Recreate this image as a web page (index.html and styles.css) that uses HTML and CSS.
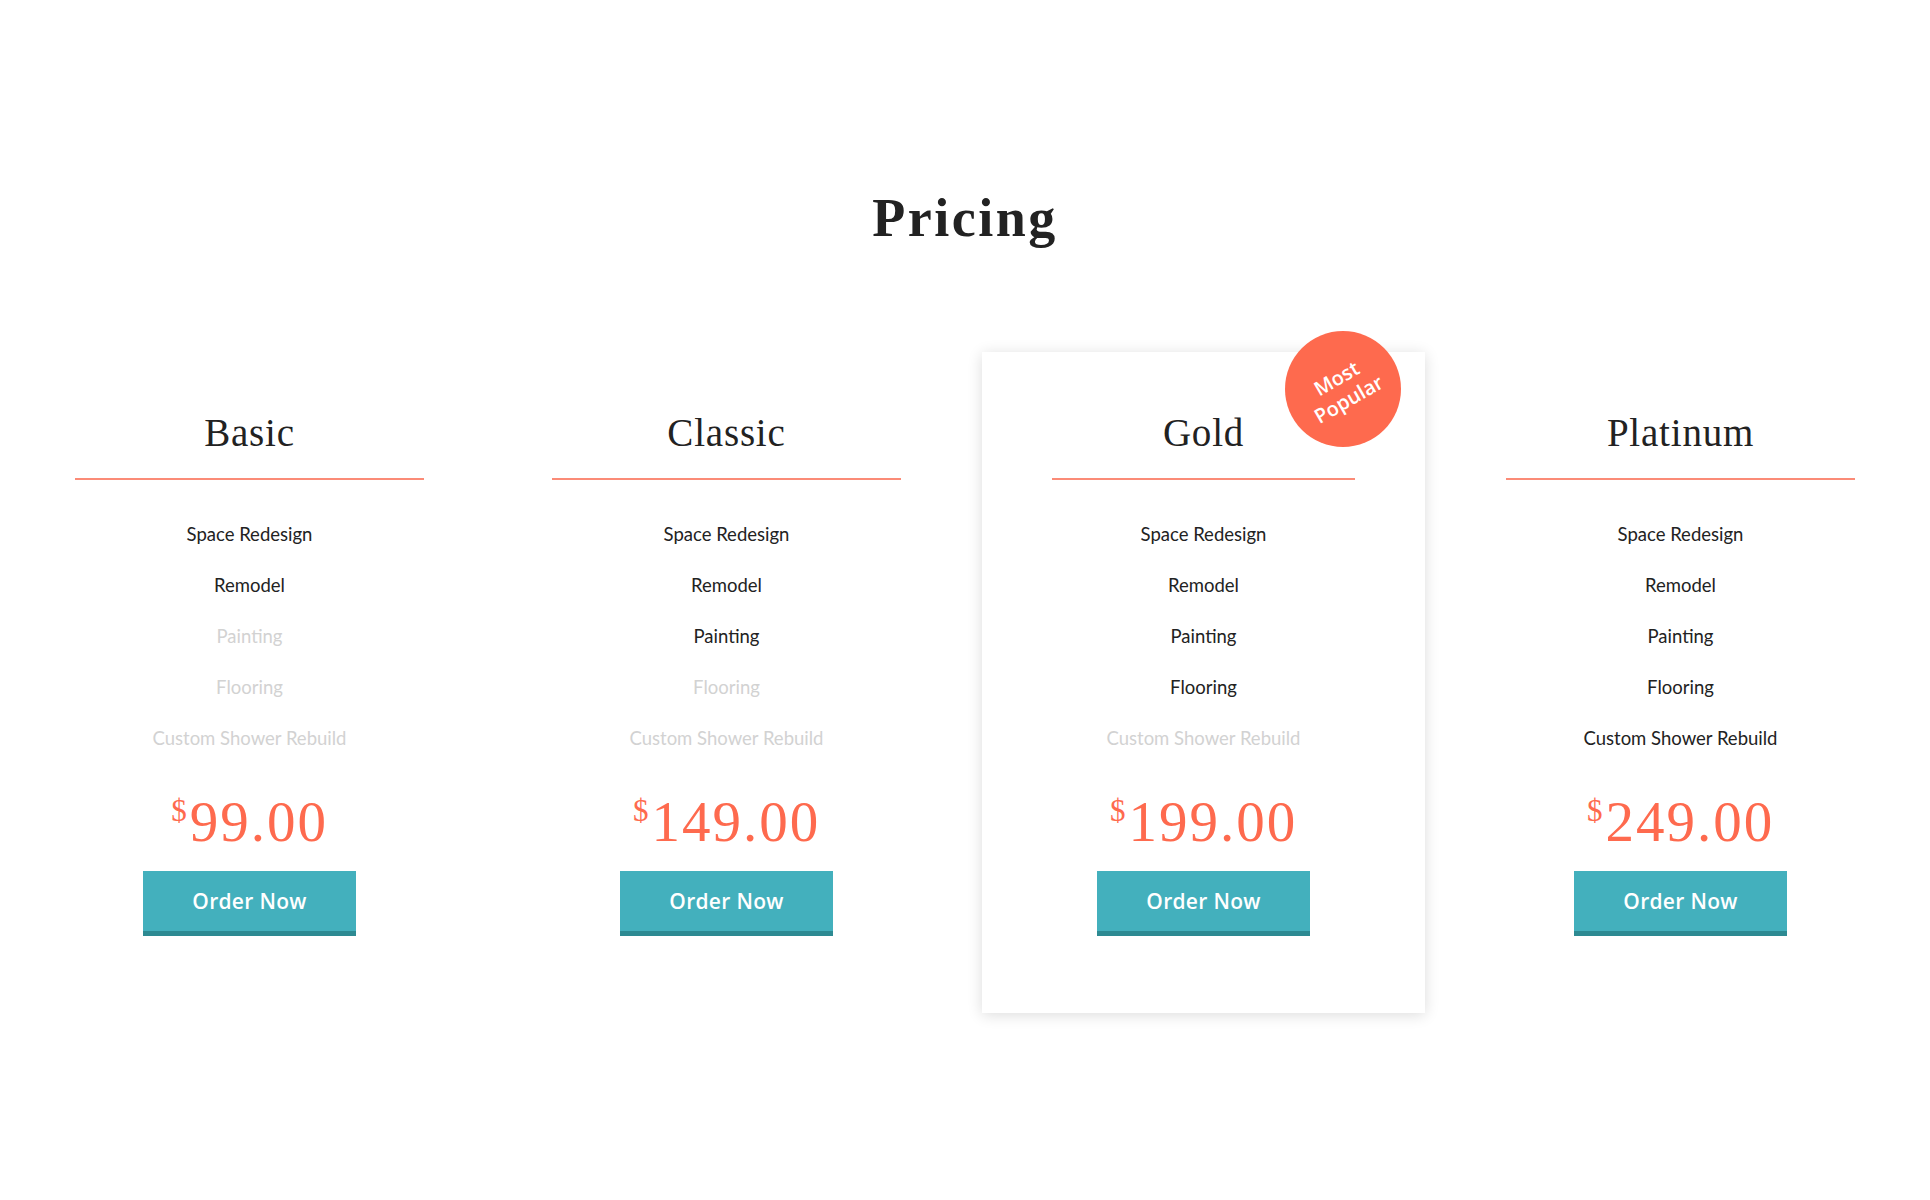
FILE: index.html
```html
<!DOCTYPE html>
<html lang="en">
<head>
<meta charset="utf-8">
<title>Pricing</title>
<link rel="stylesheet" href="styles.css">
</head>
<body>
<section class="pricing">
  <h1 class="pricing-title">Pricing</h1>
  <div class="plans">
    <div class="plan">
      <h2 class="plan-name">Basic</h2>
      <ul class="features">
        <li>Space Redesign</li>
        <li>Remodel</li>
        <li class="off">Painting</li>
        <li class="off">Flooring</li>
        <li class="off">Custom Shower Rebuild</li>
      </ul>
      <div class="price"><sup class="cur">$</sup>99.00</div>
      <a class="btn" href="#">Order Now</a>
    </div>
    <div class="plan">
      <h2 class="plan-name">Classic</h2>
      <ul class="features">
        <li>Space Redesign</li>
        <li>Remodel</li>
        <li>Painting</li>
        <li class="off">Flooring</li>
        <li class="off">Custom Shower Rebuild</li>
      </ul>
      <div class="price"><sup class="cur">$</sup>149.00</div>
      <a class="btn" href="#">Order Now</a>
    </div>
    <div class="plan featured">
      <div class="badge"><span>Most<br>Popular</span></div>
      <h2 class="plan-name">Gold</h2>
      <ul class="features">
        <li>Space Redesign</li>
        <li>Remodel</li>
        <li>Painting</li>
        <li>Flooring</li>
        <li class="off">Custom Shower Rebuild</li>
      </ul>
      <div class="price"><sup class="cur">$</sup>199.00</div>
      <a class="btn" href="#">Order Now</a>
    </div>
    <div class="plan">
      <h2 class="plan-name">Platinum</h2>
      <ul class="features">
        <li>Space Redesign</li>
        <li>Remodel</li>
        <li>Painting</li>
        <li>Flooring</li>
        <li>Custom Shower Rebuild</li>
      </ul>
      <div class="price"><sup class="cur">$</sup>249.00</div>
      <a class="btn" href="#">Order Now</a>
    </div>
  </div>
</section>
</body>
</html>
```

FILE: styles.css
```css
html, body {
  margin: 0;
  padding: 0;
  background: #ffffff;
}

.pricing {
  padding-top: 191px;
  padding-bottom: 120px;
}

.pricing-title {
  margin: 0;
  text-align: center;
  font-family: "Liberation Serif", "Times New Roman", serif;
  font-weight: 700;
  font-size: 54px;
  line-height: 1;
  letter-spacing: 2.5px;
  color: #222222;
}

.plans {
  display: grid;
  grid-template-columns: repeat(4, 477px);
  justify-content: center;
  margin-top: 107px;
}

.plan {
  position: relative;
  margin: 0 17px;
  padding: 61px 47px 77px;
  text-align: center;
  display: flex;
  flex-direction: column;
  align-items: center;
}

.featured {
  background: #ffffff;
  box-shadow: 0 2px 14px rgba(0, 0, 0, 0.14);
}

.plan-name {
  align-self: stretch;
  margin: 0;
  padding-bottom: 26px;
  border-bottom: 2px solid #fb8b77;
  font-family: "Liberation Serif", "Times New Roman", serif;
  font-weight: 400;
  font-size: 39px;
  line-height: 1;
  letter-spacing: 0.8px;
  color: #222222;
}

.featured .plan-name {
  margin: 0 23px;
}

.features {
  list-style: none;
  margin: 29px 0 0;
  padding: 0;
  font-family: Lato, "Open Sans", sans-serif;
  font-size: 18.5px;
  line-height: 51px;
  color: #222222;
}

.features .off {
  color: #d2d2d2;
}

.price {
  margin-top: 29px;
  font-family: "Liberation Serif", "Times New Roman", serif;
  font-size: 57px;
  line-height: 1;
  letter-spacing: 2px;
  color: #fe6a4e;
}

.cur {
  font-size: 31px;
  vertical-align: top;
  position: relative;
  top: 2px;
  margin-right: 1px;
  line-height: 1;
}

.btn {
  display: block;
  box-sizing: border-box;
  width: 213px;
  height: 65px;
  margin-top: 21px;
  background: #43b0bd;
  border-bottom: 5px solid #2d8a92;
  font-family: "Open Sans", Lato, sans-serif;
  font-weight: 600;
  font-size: 21px;
  line-height: 61px;
  letter-spacing: 0.3px;
  color: #ffffff;
  text-decoration: none;
}

.badge {
  position: absolute;
  top: -21px;
  right: 24px;
  width: 116px;
  height: 116px;
  border-radius: 50%;
  background: #fe6a4e;
  display: flex;
  align-items: center;
  justify-content: center;
}

.badge span {
  display: block;
  transform: rotate(-30deg);
  font-family: "Open Sans", Lato, sans-serif;
  font-weight: 600;
  font-size: 20px;
  line-height: 24px;
  color: #ffffff;
  text-align: center;
}
```
